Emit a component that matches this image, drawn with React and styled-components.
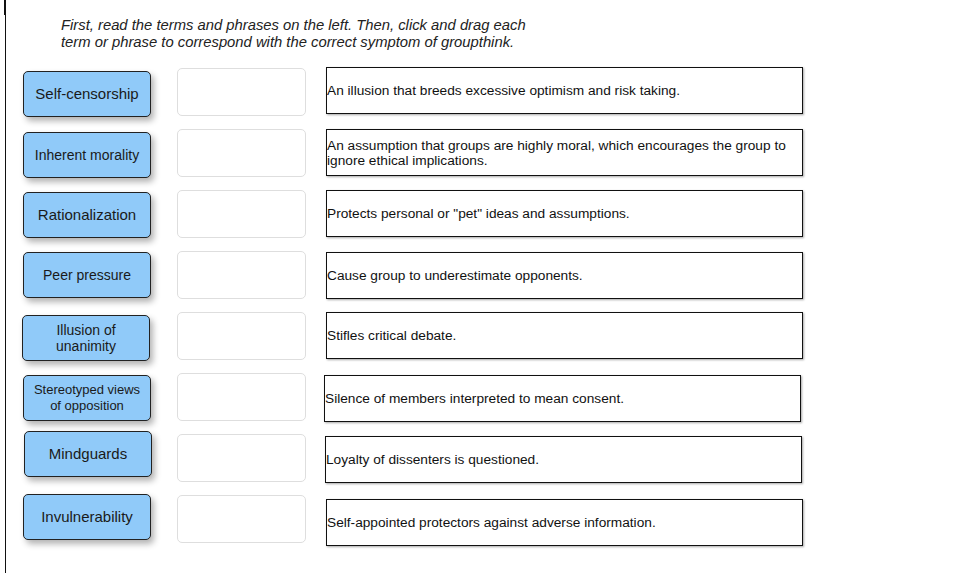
import React from "react";
import styled, { createGlobalStyle } from "styled-components";

const Global = createGlobalStyle`
  html, body { margin: 0; padding: 0; background: #fff; }
  body { font-family: "Liberation Sans", Arial, sans-serif; }
`;

const Page = styled.div`
  position: relative;
  margin-left: 5px;
  border-left: 1px solid #111;
  height: 573px;
  box-sizing: border-box;
  padding-top: 17px;
  &::before {
    content: "";
    position: absolute;
    left: -2px;
    top: 0;
    width: 2px;
    height: 15px;
    background: #111;
  }
`;

const Instructions = styled.p`
  margin: 0 0 0 55px;
  font-style: italic;
  font-size: 14.8px;
  line-height: 17px;
  color: #222;
  width: 475px;
`;

const Rows = styled.div`
  margin-top: 16px;
  display: flex;
  flex-direction: column;
`;

const Row = styled.div`
  display: flex;
  align-items: flex-start;
  height: 61px;
  padding-left: 17px;
`;

const Term = styled.div`
  box-sizing: border-box;
  width: 128px;
  height: 46px;
  margin-top: ${(p) => p.$top}px;
  margin-left: ${(p) => p.$shift}px;
  margin-right: ${(p) => 27 - p.$shift}px;
  background: #90caf9;
  border: 1px solid #222;
  border-radius: 5px;
  box-shadow: 3px 4px 6px rgba(0, 0, 0, 0.3);
  display: flex;
  align-items: center;
  justify-content: center;
  text-align: center;
  font-size: ${(p) => p.$size}px;
  line-height: 16px;
  color: #1a1a1a;
  padding: 0 6px;
`;

const Drop = styled.div`
  box-sizing: border-box;
  width: 129px;
  height: 48px;
  margin-top: 1px;
  margin-left: -1px;
  border: 1px solid #dedede;
  border-radius: 5px;
  background: #fff;
  margin-right: 20px;
`;

const Desc = styled.div`
  box-sizing: border-box;
  width: 477px;
  height: 47px;
  margin-top: ${(p) => p.$top}px;
  margin-left: ${(p) => p.$shift}px;
  border: 1px solid #111;
  box-shadow: 1px 1px 2px rgba(0, 0, 0, 0.35);
  display: flex;
  align-items: center;
  padding-left: 0;
  font-size: 13.7px;
  line-height: 15px;
  color: #111;
`;

const items = [
  { term: "Self-censorship", size: 15, tTop: 4, tShift: 0, desc: "An illusion that breeds excessive optimism and risk taking.", dTop: 0, dShift: 0 },
  { term: "Inherent morality", size: 14, tTop: 4, tShift: 0, desc: "An assumption that groups are highly moral, which encourages the group to ignore ethical implications.", dTop: 1, dShift: 0 },
  { term: "Rationalization", size: 15, tTop: 3, tShift: 0, desc: 'Protects personal or "pet" ideas and assumptions.', dTop: 1, dShift: 0 },
  { term: "Peer pressure", size: 14, tTop: 2, tShift: 0, desc: "Cause group to underestimate opponents.", dTop: 2, dShift: 0 },
  { term: "Illusion of unanimity", size: 14, tTop: 4, tShift: -1, desc: "Stifles critical debate.", dTop: 1, dShift: 0 },
  { term: "Stereotyped views of opposition", size: 13, tTop: 3, tShift: 0, desc: "Silence of members interpreted to mean consent.", dTop: 3, dShift: -2 },
  { term: "Mindguards", size: 15, tTop: -2, tShift: 1, desc: "Loyalty of dissenters is questioned.", dTop: 3, dShift: -1 },
  { term: "Invulnerability", size: 15, tTop: 0, tShift: 0, desc: "Self-appointed protectors against adverse information.", dTop: 5, dShift: 0 },
];

export default function App() {
  return (
    <>
      <Global />
      <Page>
        <Instructions>
          First, read the terms and phrases on the left. Then, click and drag each term or phrase to correspond with the correct symptom of groupthink.
        </Instructions>
        <Rows>
          {items.map((it) => (
            <Row key={it.term}>
              <Term $size={it.size} $top={it.tTop} $shift={it.tShift}>
                {it.term}
              </Term>
              <Drop />
              <Desc $top={it.dTop} $shift={it.dShift}>
                {it.desc}
              </Desc>
            </Row>
          ))}
        </Rows>
      </Page>
    </>
  );
}
